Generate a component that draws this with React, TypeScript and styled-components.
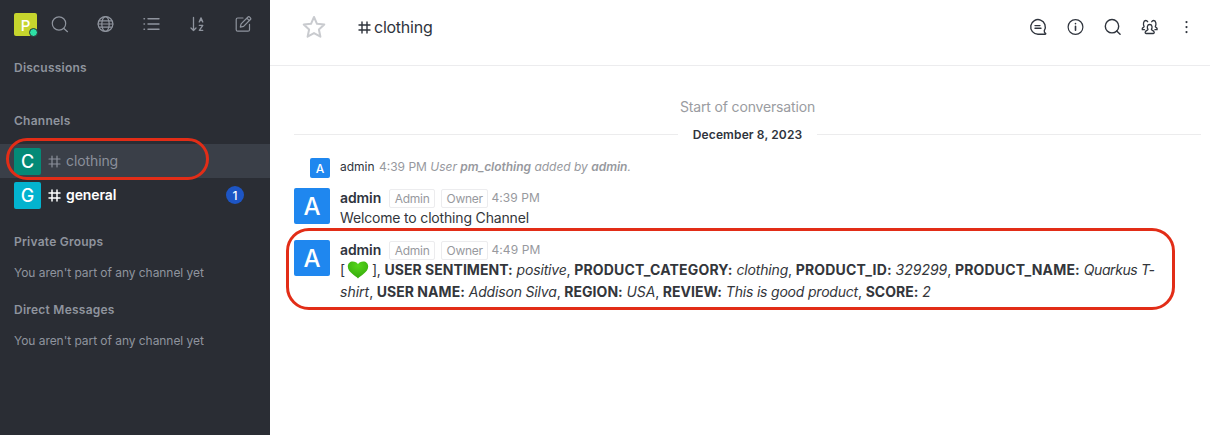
import React from 'react';
import styled, { createGlobalStyle, css } from 'styled-components';

const GlobalStyle = createGlobalStyle`
  * { box-sizing: border-box; }
  body { margin: 0; background: #fff; }
  body, button { font-family: Inter, "Liberation Sans", sans-serif; }
  svg { display: block; flex: none; }
`;

const Page = styled.div`
  display: flex;
  width: 1210px;
  height: 435px;
  overflow: hidden;
`;

const Sidebar = styled.aside`
  width: 270px;
  flex: none;
  background: #2a2d34;
  color: #8f949e;
`;

const Toolbar = styled.div`
  display: flex;
  align-items: center;
  height: 48px;
  padding: 1px 18px 0 14px;
`;

const ToolIcons = styled.div`
  display: flex;
  flex: 1;
  justify-content: space-between;
  margin-left: 14px;
`;

const Avatar = styled.div<{ $size: number; $bg: string; $font: number }>`
  position: relative;
  display: flex;
  flex: none;
  align-items: center;
  justify-content: center;
  width: ${p => p.$size}px;
  height: ${p => p.$size}px;
  padding-top: 1px;
  border-radius: 2px;
  background: ${p => p.$bg};
  color: #fff;
  font-size: ${p => p.$font}px;
  font-weight: 500;
  line-height: 1;
`;

const Presence = styled.span`
  position: absolute;
  right: -1px;
  bottom: -0.5px;
  width: 9px;
  height: 9px;
  border: 1.5px solid #2a2d34;
  border-radius: 50%;
  background: #2de0a5;
`;

const GroupTitle = styled.h3<{ $top: number }>`
  margin: ${p => p.$top}px 0 0;
  padding-left: 14px;
  font-size: 12px;
  line-height: 20px;
  font-weight: 600;
  letter-spacing: 0.24px;
`;

const EmptyText = styled.p`
  margin: 11px 0 0;
  padding-left: 14px;
  font-size: 12px;
  line-height: 20px;
  letter-spacing: -0.05px;
`;

const ChannelList = styled.div`
  position: relative;
  margin-top: 13px;
`;

const Channel = styled.div<{ $active?: boolean }>`
  display: flex;
  align-items: center;
  height: 34px;
  padding: 0 26px 0 14px;
  background: ${p => (p.$active ? '#3a3f48' : 'transparent')};
  color: ${p => (p.$active ? '#8b909b' : '#fff')};
  font-size: 14px;
  font-weight: ${p => (p.$active ? 400 : 600)};
  letter-spacing: -0.1px;
  svg { margin: 0 5px 0 7px; }
`;

const ChannelName = styled.span`
  margin-top: -1px;
`;

const Badge = styled.span`
  display: flex;
  align-items: center;
  justify-content: center;
  width: 18px;
  height: 18px;
  margin-left: auto;
  border-radius: 50%;
  background: #1d55c4;
  color: #fff;
  font-size: 12px;
  font-weight: 500;
`;

const outline = css`
  position: absolute;
  border: 3px solid #e22d17;
  pointer-events: none;
`;

const ChannelHighlight = styled.div`
  ${outline}
  left: 6px;
  top: -6px;
  width: 203px;
  height: 42px;
  border-radius: 21px;
`;

const MessageHighlight = styled.div`
  ${outline}
  left: -8.5px;
  top: -12.5px;
  width: 889px;
  height: 82px;
  border-radius: 23px;
`;

const Main = styled.main`
  flex: 1;
  min-width: 0;
  color: #2f343d;
`;

const Header = styled.header`
  display: flex;
  align-items: center;
  height: 66px;
  padding: 0 14px 11px 31px;
  border-bottom: 1px solid #ececee;
`;

const RoomName = styled.h1`
  display: flex;
  align-items: center;
  gap: 3px;
  margin: 0 0 0 31px;
  font-size: 16px;
  line-height: 22px;
  font-weight: 400;
  letter-spacing: -0.25px;
`;

const Actions = styled.div`
  display: flex;
  gap: 19.2px;
  margin-left: auto;
`;

const Start = styled.div`
  margin-top: 31px;
  text-align: center;
  color: #9a9ca1;
  font-size: 14px;
  line-height: 20px;
  letter-spacing: -0.16px;
  padding-left: 15px;
`;

const DateDivider = styled.div`
  display: flex;
  align-items: center;
  height: 20px;
  margin: 7px 9px 0 24px;
  font-size: 12px;
  font-weight: 600;
  gap: 15px;
  letter-spacing: 0.12px;
  white-space: nowrap;
  &::before, &::after { content: ''; flex: 1; height: 1px; background: #ececed; }
`;

const SystemMessage = styled.div`
  display: flex;
  align-items: center;
  gap: 10px;
  height: 20px;
  margin: 14px 0 0 40px;
  color: #97999e;
  font-size: 12px;
  white-space: pre;
`;

const SystemText = styled.span`
  margin-top: -3px;
  b { font-weight: 600; }
  span { margin-right: 1px; color: #2f343d; }
  i { letter-spacing: -0.02px; }
`;

const Message = styled.article<{ $top: number }>`
  position: relative;
  display: flex;
  gap: 10px;
  margin: ${p => p.$top}px 0 0 24px;
`;

const MessageContent = styled.div`
  margin-top: -1px;
`;

const MessageHead = styled.div`
  display: flex;
  align-items: center;
  height: 20px;
  color: #97999e;
  font-size: 12px;
  strong {
    margin-right: 8px;
    color: #2f343d;
    font-size: 14px;
    font-weight: 600;
    letter-spacing: -0.1px;
  }
  time { margin-left: -3px; letter-spacing: 0.1px; }
`;

const Role = styled.span`
  height: 19px;
  margin: 2px 6px 0 0;
  padding: 0 4.5px;
  border: 1px solid #ececee;
  border-radius: 2px;
  line-height: 17px;
  letter-spacing: -0.25px;
`;

const Body = styled.div`
  font-size: 14px;
  line-height: 22px;
  white-space: nowrap;
  color: #33363b;
  letter-spacing: -0.17px;
`;

const Key = styled.b<{ $wide?: boolean }>`
  font-weight: 700;
  letter-spacing: ${p => (p.$wide ? 0.17 : 0.03)}px;
`;

const Value = styled.i<{ $tracking?: number }>`
  letter-spacing: ${p => p.$tracking ?? -0.17}px;
`;

const Line = styled.div`
  display: flex;
  white-space: pre;
`;

const Heart = styled.svg`
  margin: 0 3px 0 2px;
`;

type IconProps = { children: React.ReactNode; size?: number; color?: string; width?: number };
const Icon = ({ children, size = 18, color = 'currentColor', width = 1.2 }: IconProps) => (
  <svg width={size} height={size} viewBox="0 0 18 18" fill="none" stroke={color}
    strokeWidth={width} strokeLinecap="round" strokeLinejoin="round">{children}</svg>
);

const Hash = ({ size = 13, width = 1.5 }: { size?: number; width?: number }) => (
  <svg width={size} height={size} viewBox="0 0 13 13" fill="none" stroke="currentColor" strokeWidth={width} strokeLinecap="round">
    <path d="M4 1v11M9 1v11M1 4h11M1 9h11" />
  </svg>
);

const Roles = ({ time }: { time: string }) => (
  <MessageHead>
    <strong>admin</strong><Role>Admin</Role><Role>Owner</Role><time>{time}</time>
  </MessageHead>
);

export default function App() {
  return (
    <Page>
      <GlobalStyle />
      <Sidebar>
        <Toolbar>
          <Avatar $size={23} $bg="#c6d52d" $font={15}>P<Presence /></Avatar>
          <ToolIcons>
            <Icon><circle cx="8" cy="7.5" r="6.7" /><path d="m12.9 12.5 3.6 3.2" /></Icon>
            <Icon>
              <circle cx="8.5" cy="8" r="7.4" /><ellipse cx="8.5" cy="8" rx="3.7" ry="7.4" />
              <path d="M1.1 8h14.8M2.3 4.800h12.400M2.300 11.200h12.400" />
            </Icon>
            <Icon width={1.4}>
              <path d="M5 2.700h11M5 8h11M5 13.300h11M1 2.700h.5M1 8h.5M1 13.300h.5" />
            </Icon>
            <Icon width={1.3}>
              <path d="M5.500 1.500v13M3 12l2.500 2.500L8 12M11.200 6 13 1.800 14.800 6M11.900 4.700h2.200M11.300 9.300h3.500l-3.500 5h3.500" />
            </Icon>
            <Icon>
              <path d="M9 2H3.700C2.800 2 2.200 2.600 2.200 3.500v10.200c0 .9.600 1.500 1.500 1.500h10.300c.9 0 1.500-.6 1.500-1.500V8.300M6.300 11.200l.8-3.300 6.900-6.900c.5-.5 1.200-.4 1.700.1l.7.7c.5.5.5 1.200 0 1.700L9.600 10.400 6.300 11.200Zm6.500-9 2.500 2.500" />
            </Icon>
          </ToolIcons>
        </Toolbar>
        <GroupTitle $top={10}>Discussions</GroupTitle>
        <GroupTitle $top={33}>Channels</GroupTitle>
        <ChannelList>
          <Channel $active><Avatar $size={27} $bg="#048a77" $font={18}>C</Avatar><Hash width={1.2} /><ChannelName>clothing</ChannelName></Channel>
          <Channel><Avatar $size={27} $bg="#03b3cf" $font={18}>G</Avatar><Hash /><ChannelName>general</ChannelName><Badge>1</Badge></Channel>
          <ChannelHighlight />
        </ChannelList>
        <GroupTitle $top={20}>Private Groups</GroupTitle>
        <EmptyText>You aren't part of any channel yet</EmptyText>
        <GroupTitle $top={17}>Direct Messages</GroupTitle>
        <EmptyText>You aren't part of any channel yet</EmptyText>
      </Sidebar>
      <Main>
        <Header>
          <svg width="26" height="26" viewBox="0 0 26 26" fill="none" stroke="#c9cbcf" strokeWidth="2" strokeLinejoin="round">
            <path d="m13 3 3 6.800 7.300.8-5.400 4.900 1.500 7.200-6.400-3.600-6.400 3.600 1.500-7.200-5.400-4.900 7.300-.8Z" />
          </svg>
          <RoomName><Hash size={13} width={1.4} />clothing</RoomName>
          <Actions>
            <Icon width={1.4}><path d="M15.300 12.600A7.300 7.300 0 1 0 9 16.200h7.300c.5 0 .6-.5.2-.8-.9-.6-1.400-1.600-1.200-2.800ZM6 7.600h5M6 10.200h6" /></Icon>
            <Icon><circle cx="9.500" cy="9" r="7.400" /><path d="M9.500 8.200v4.100M9.500 5.600v.2" strokeWidth="1.600" /></Icon>
            <Icon width={1.4}><circle cx="8" cy="8.200" r="6.700" /><path d="m12.700 13 3.400 3.200" /></Icon>
            <Icon width={1.3}>
              <path d="M7 11.400C5.900 9.900 6 6.500 8.700 6.500s2.800 3.400 1.700 4.900c.1 1.100 2.600.9 2.800 2.900.1.700-.3 1.200-1 1.200h-7c-.7 0-1.100-.5-1-1.200.2-2 2.700-1.800 2.800-2.900ZM3.500 11.700H1.300c-.8-2.400 2-2.100 1.800-3.300C2 6.600 2.200 2.500 4.700 2.500c.9 0 1.600.4 2 1.200M13.900 11.700h2.200c.8-2.400-2-2.100-1.800-3.300 1.100-1.800.9-5.900-1.600-5.900-.9 0-1.600.4-2 1.200" />
            </Icon>
            <Icon width={2.200}><path d="M8.500 4v.1M8.500 9v.1M8.500 14v.1" /></Icon>
          </Actions>
        </Header>
        <Start>Start of conversation</Start>
        <DateDivider>December 8, 2023</DateDivider>
        <SystemMessage>
          <Avatar $size={20} $bg="#1f87ef" $font={12}>A</Avatar>
          <SystemText><span>admin</span> <time>4:39 PM</time> <i>User <b>pm_clothing</b> added by <b>admin</b>.</i></SystemText>
        </SystemMessage>
        <Message $top={10}>
          <Avatar $size={36} $bg="#1f87ef" $font={24}>A</Avatar>
          <MessageContent><Roles time="4:39 PM" /><Body>Welcome to clothing Channel</Body></MessageContent>
        </Message>
        <Message $top={11}>
          <Avatar $size={36} $bg="#1f87ef" $font={24}>A</Avatar>
          <MessageContent>
            <Roles time="4:49 PM" />
            <Body>
              <Line>
                [<Heart width="22" height="22" viewBox="0 0 22 22">
                  <defs><radialGradient id="heart" cx="50%" cy="25%" r="75%"><stop stopColor="#55d61a" /><stop offset="1" stopColor="#35a80c" /></radialGradient></defs>
                  <path fill="url(#heart)" d="M11 19.500C8.500 16.500.8 13.400.8 7.500.8 4.500 3 2.500 5.700 2.500c2.400 0 4.300 1 5.300 2.800 1-1.800 2.900-2.800 5.300-2.800 2.700 0 4.900 2 4.900 5 0 5.900-7.700 9-10.200 12Z" />
                </Heart>
                <span>], <Key>USER SENTIMENT:</Key> <Value>positive</Value>, <Key $wide>PRODUCT_CATEGORY:</Key> <Value>clothing</Value>, <Key $wide>PRODUCT_ID:</Key> <Value $tracking={0}>329299</Value>, <Key $wide>PRODUCT_NAME:</Key> <Value $tracking={-0.4}>Quarkus T-</Value></span>
              </Line>
              <Line><span><Value $tracking={0}>shirt</Value>, <Key>USER NAME:</Key> <Value>Addison Silva</Value>, <Key>REGION:</Key> <Value>USA</Value>, <Key>REVIEW:</Key> <Value $tracking={-0.2}>This is good product</Value>, <Key>SCORE:</Key> <Value>2</Value></span></Line>
            </Body>
          </MessageContent>
          <MessageHighlight />
        </Message>
      </Main>
    </Page>
  );
}
